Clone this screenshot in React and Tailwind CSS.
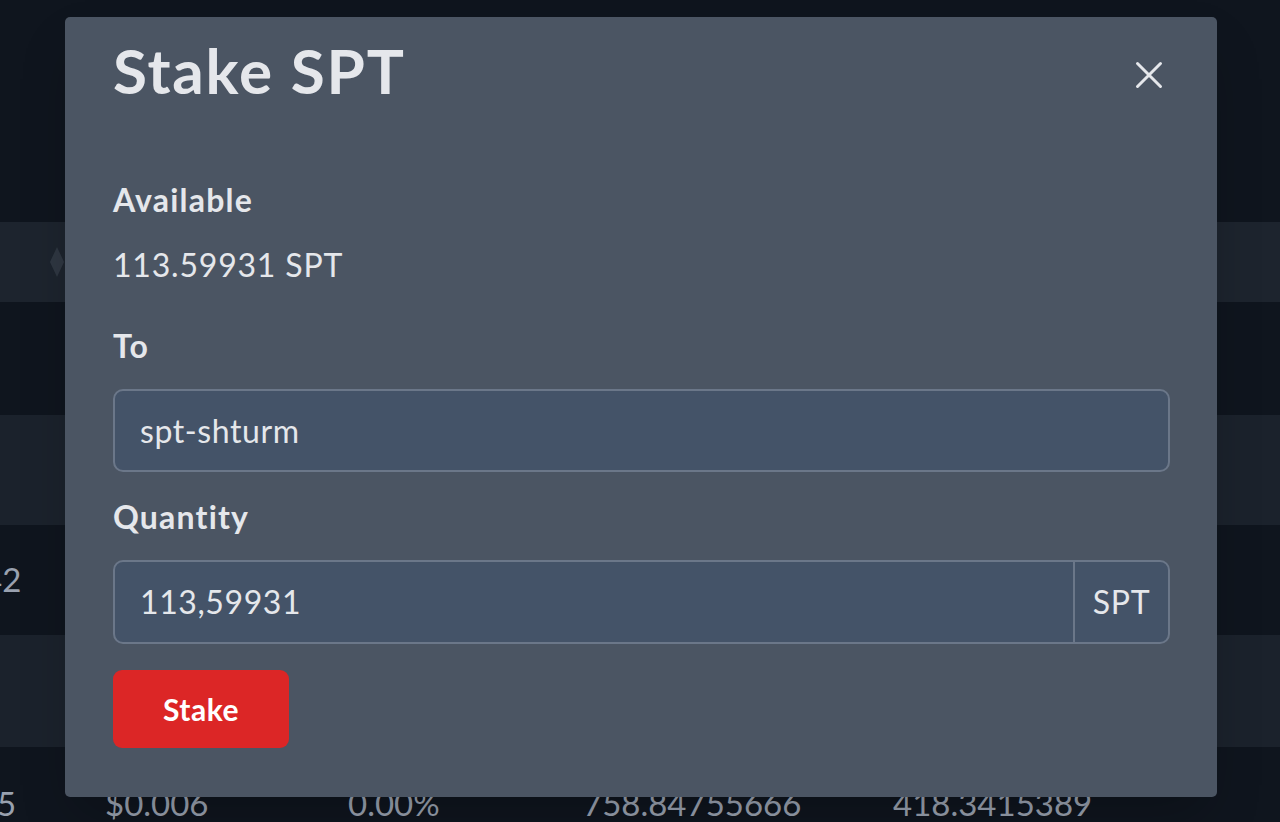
import React from 'react';

const font = { fontFamily: 'Lato, "Open Sans", sans-serif' };

const CloseIcon = () => (
  <svg width="28" height="28" viewBox="0 0 28 28" fill="none" className="text-gray-200">
    <path d="M2.5 2.5L25.5 25.5M25.5 2.5L2.5 25.5" stroke="currentColor" strokeWidth="3" strokeLinecap="round" />
  </svg>
);

const StakeModal = () => (
  <div className="absolute left-[65px] top-[17px] w-[1152px] h-[780px] rounded-[5px] bg-[#4b5563] pl-[48px] pr-[47px] pt-[22px] text-gray-200 shadow-2xl">
    <div className="flex items-start justify-between">
      <h2 className="text-[62px] font-bold leading-none tracking-[1.8px]">Stake SPT</h2>
      <button className="mt-[22px] mr-[7px]"><CloseIcon /></button>
    </div>

    <div className="mt-[83px] text-[32px] font-bold leading-none tracking-[1.2px]">Available</div>
    <div className="mt-[33px] text-[32px] leading-none tracking-[0.8px]">113.59931 SPT</div>

    <div className="mt-[49px] text-[32px] font-bold leading-none tracking-[1.2px]">To</div>
    <div className="mt-[27px] flex h-[83px] items-center rounded-[10px] border-2 border-[#6b7789] bg-[#445368] px-[25px] text-[32px] tracking-[0.6px]">
      spt-shturm
    </div>

    <div className="mt-[29px] text-[32px] font-bold leading-none tracking-[1.2px]">Quantity</div>
    <div className="mt-[27px] flex h-[84px] rounded-[10px] border-2 border-[#6b7789] bg-[#445368] text-[32px] tracking-[0.6px]">
      <div className="flex flex-1 items-center px-[25px]">113,59931</div>
      <div className="flex w-[95px] items-center justify-center border-l-2 border-[#6b7789]">SPT</div>
    </div>

    <button className="mt-[26px] flex h-[78px] w-[176px] items-center justify-center rounded-[9px] bg-[#dc2626] text-[30px] font-bold tracking-[0.5px] text-white">
      Stake
    </button>
  </div>
);

export default function App() {
  return (
    <div className="relative h-[822px] w-[1280px] overflow-hidden bg-[#0e141d]" style={font}>
      <div className="flex h-full flex-col">
        <div className="h-[222px] bg-[#0f151e]" />
        <div className="flex h-[80px] items-center bg-[#1d242e] pl-[50px]">
          <svg width="14" height="30" viewBox="0 0 14 30" className="text-[#2f3742]">
            <path d="M7 0L14 15L7 30L0 15Z" fill="currentColor" />
          </svg>
        </div>
        <div className="h-[113px] bg-[#0f151e]" />
        <div className="h-[110px] bg-[#1b222c]" />
        <div className="flex h-[110px] items-center bg-[#0f151e] text-[33px] text-gray-400">
          <span className="-ml-[17px]">42</span>
        </div>
        <div className="h-[112px] bg-[#1b222c]" />
        <div className="flex flex-1 items-end bg-[#0f151e] text-[33px] leading-[38px] text-gray-400">
          <span className="-ml-[30px] w-[135px]">1.5</span>
          <span className="w-[243px]">$0.006</span>
          <span className="w-[235px]">0.00%</span>
          <span className="w-[310px]">758.84755666</span>
          <span>418.3415389</span>
        </div>
      </div>
      <StakeModal />
    </div>
  );
}
